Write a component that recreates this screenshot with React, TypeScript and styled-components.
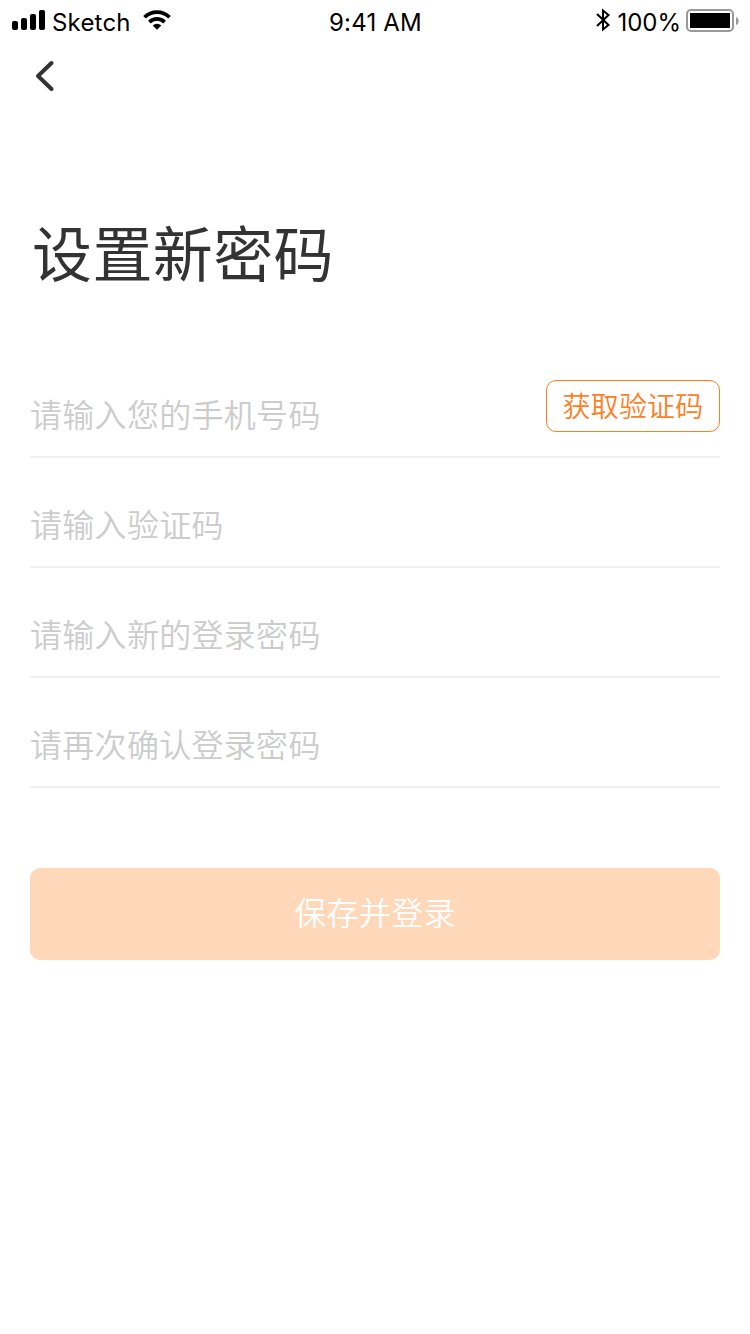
import React from "react";
import styled, { createGlobalStyle } from "styled-components";

const GlobalStyle = createGlobalStyle`
  * { box-sizing: border-box; }
  body {
    margin: 0;
    background: #fff;
    font-family: "Noto Sans CJK SC", sans-serif;
    font-weight: 350;
  }
  button, input { font: inherit; margin: 0; padding: 0; }
`;

const Screen = styled.div`
  display: flex;
  flex-direction: column;
  width: 750px;
  height: 1334px;
  overflow: hidden;
  background: #fff;
`;

const StatusBar = styled.div`
  display: grid;
  grid-template-columns: 1fr auto 1fr;
  align-items: center;
  height: 40px;
  padding: 0 11px 0 12px;
  color: #000;
  font: 400 24px/34px Inter, sans-serif;
`;

const StatusGroup = styled.div<{ $end?: boolean }>`
  display: flex;
  align-items: center;
  justify-content: ${(p) => (p.$end ? "flex-end" : "flex-start")};
`;

const StatusText = styled.span<{ $spacing?: number; $left?: number; $right?: number }>`
  display: block;
  padding-top: 6px;
  letter-spacing: ${(p) => p.$spacing ?? 0}px;
  margin-left: ${(p) => p.$left ?? 0}px;
  margin-right: ${(p) => p.$right ?? 0}px;
  white-space: nowrap;
`;

const Icon = styled.svg`
  display: block;
  flex: none;
`;

const NavBar = styled.nav`
  display: flex;
  align-items: center;
  height: 88px;
  padding: 0 30px 16px;
`;

const BackButton = styled.button`
  border: 0;
  background: none;
`;

const Title = styled.h1`
  margin: 78px 30px 0 32px;
  color: #333;
  font-size: 60px;
  font-weight: 400;
  letter-spacing: 0.4px;
  line-height: 90px;
`;

const Form = styled.form`
  display: flex;
  flex-direction: column;
  margin: 52px 30px 0;
`;

const Field = styled.div`
  display: flex;
  align-items: flex-end;
  height: 110px;
  border-bottom: 2px solid #f0f0f0;
`;

const Input = styled.input`
  flex: 1;
  min-width: 0;
  height: 86px;
  border: 0;
  outline: 0;
  background: none;
  color: #333;
  font-size: 32px;
  letter-spacing: 0.3px;
  &::placeholder { color: #ccc; opacity: 1; }
`;

const CodeButton = styled.button`
  width: 174px;
  height: 52px;
  margin-bottom: 24px;
  padding-bottom: 2px;
  border: 1px solid #ff7e1f;
  border-radius: 10px;
  background: #fff;
  color: #ff7e1f;
  font-size: 28px;
  letter-spacing: 0.2px;
  line-height: 48px;
`;

const SubmitButton = styled.button`
  height: 92px;
  margin-top: 80px;
  padding-bottom: 7px;
  border: 0;
  border-radius: 10px;
  background: #ffd7b9;
  color: #fff;
  font-size: 32px;
  letter-spacing: 0.3px;
`;

export default function App() {
  return (
    <Screen>
      <GlobalStyle />
      <StatusBar>
        <StatusGroup>
          <Icon width="33" height="20" viewBox="0 0 33 20">
            <rect x="0" y="11" width="6" height="9" rx="2" />
            <rect x="9" y="8" width="6" height="12" rx="2" />
            <rect x="18" y="4" width="6" height="16" rx="2" />
            <rect x="27" y="0" width="6" height="20" rx="2" />
          </Icon>
          <StatusText $left={7} $right={11} $spacing={0.2}>Sketch</StatusText>
          <Icon width="30" height="20" viewBox="0 0 30 20" fill="none" stroke="#000" strokeWidth="3.7">
            <path d="M2.5 7.300A17.600 17.600 0 0 1 27.500 7.300" />
            <path d="M7.400 12.100A10.800 10.800 0 0 1 22.600 12.100" />
            <path d="M10.700 15.400A6.100 6.100 0 0 1 19.300 15.400L15 19.700Z" fill="#000" stroke="none" />
          </Icon>
        </StatusGroup>
        <StatusText $spacing={0.2}>9:41 AM</StatusText>
        <StatusGroup $end>
          <Icon width="16" height="24" viewBox="0 0 16 24" fill="none" stroke="#000" strokeWidth="2">
            <path d="M2 6L13.500 17L8 21.500V2.500L13.500 7L2 18" />
          </Icon>
          <StatusText $left={6} $right={5}>100%</StatusText>
          <Icon width="53" height="24" viewBox="0 0 53 24">
            <rect x="1" y="2" width="46" height="21" rx="4" fill="none" stroke="#999" strokeWidth="2" />
            <rect x="4" y="5" width="40" height="15" />
            <path d="M50 9Q52.700 10 52.700 13T50 17Z" fill="#999" />
          </Icon>
        </StatusGroup>
      </StatusBar>
      <NavBar>
        <BackButton aria-label="返回">
          <Icon width="30" height="36" viewBox="0 0 30 36" fill="none" stroke="#333" strokeWidth="4" strokeLinecap="round" strokeLinejoin="round">
            <path d="M21.500 5L8 18L21.500 31" />
          </Icon>
        </BackButton>
      </NavBar>
      <Title>设置新密码</Title>
      <Form>
        <Field>
          <Input placeholder="请输入您的手机号码" />
          <CodeButton type="button">获取验证码</CodeButton>
        </Field>
        <Field><Input placeholder="请输入验证码" /></Field>
        <Field><Input placeholder="请输入新的登录密码" /></Field>
        <Field><Input placeholder="请再次确认登录密码" /></Field>
        <SubmitButton type="button">保存并登录</SubmitButton>
      </Form>
    </Screen>
  );
}
